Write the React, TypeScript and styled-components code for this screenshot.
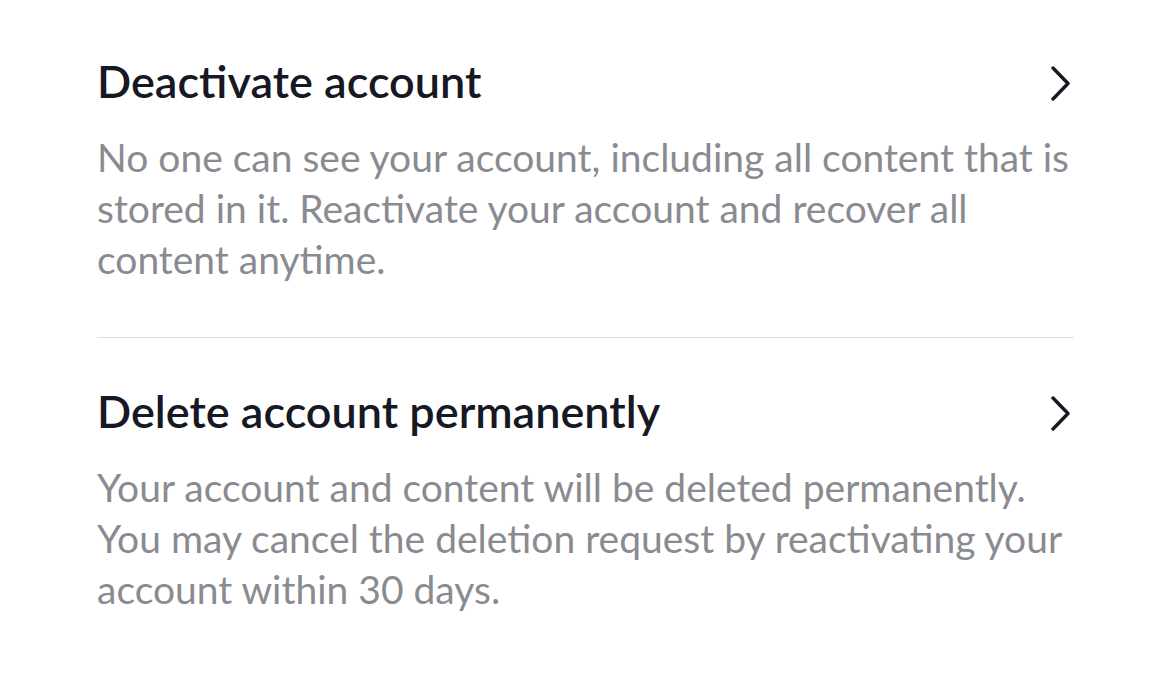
import styled, { createGlobalStyle } from 'styled-components';

const GlobalStyle = createGlobalStyle`
  html, body {
    margin: 0;
    padding: 0;
    background: #ffffff;
  }
  body {
    font-family: Lato, 'Liberation Sans', sans-serif;
    -webkit-font-smoothing: antialiased;
  }
`;

const Page = styled.div`
  width: 1170px;
  height: 678px;
  box-sizing: border-box;
  padding: 0 96px 0 97px;
  background: #ffffff;
`;

// 계정 항목 한 칸
const Item = styled.div<{ $first?: boolean }>`
  padding-top: ${(p) => (p.$first ? '54px' : '46px')};
  padding-bottom: 52px;
  border-bottom: ${(p) => (p.$first ? '1px solid #dedee0' : 'none')};
`;

const TitleRow = styled.div`
  display: flex;
  align-items: center;
  justify-content: space-between;
`;

const Title = styled.div`
  font-size: 45px;
  font-weight: 600;
  line-height: 54px;
  color: #161823;
`;

const Chevron = styled.svg`
  width: 19px;
  height: 35px;
  margin-top: 5px;
  margin-right: 4px;
  flex-shrink: 0;
`;

const Description = styled.p`
  margin: 24px 0 0;
  font-size: 39px;
  line-height: 51px;
  color: #8a8b91;
`;

const items = [
  {
    title: 'Deactivate account',
    text: 'No one can see your account, including all content that is stored in it. Reactivate your account and recover all content anytime.',
  },
  {
    title: 'Delete account permanently',
    text: 'Your account and content will be deleted permanently. You may cancel the deletion request by reactivating your account within 30 days.',
  },
];

const App = () => {
  return (
    <>
      <GlobalStyle />
      <Page>
        {items.map((item, i) => (
          <Item key={item.title} $first={i === 0}>
            <TitleRow>
              <Title>{item.title}</Title>
              <Chevron viewBox="0 0 19 35" fill="none">
                <path d="M2 2 L17 17.5 L2 33" stroke="#161823" strokeWidth="3.4" strokeLinecap="round" strokeLinejoin="round" />
              </Chevron>
            </TitleRow>
            <Description>{item.text}</Description>
          </Item>
        ))}
      </Page>
    </>
  );
};

export default App;
